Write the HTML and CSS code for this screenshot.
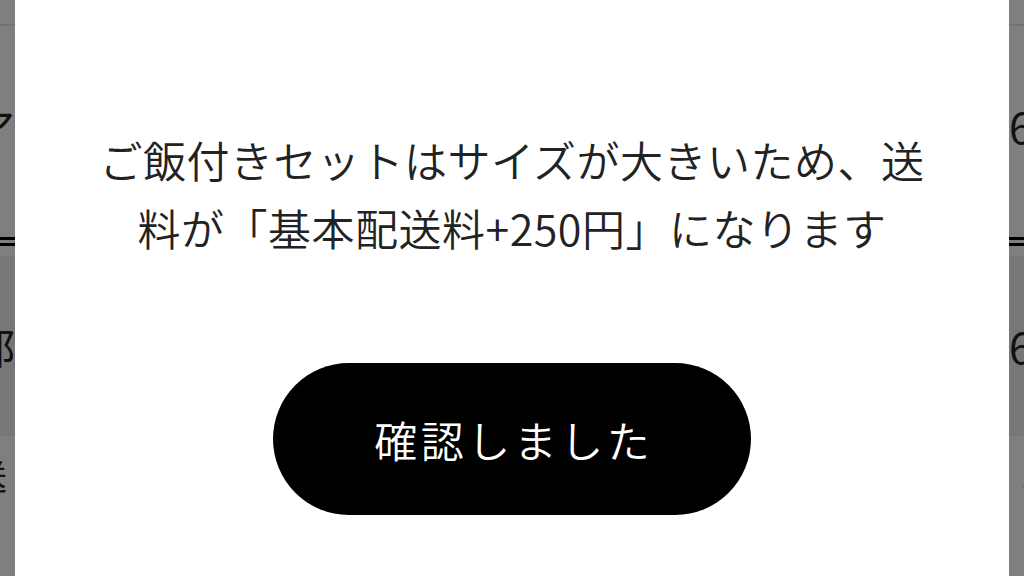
FILE: index.html
```html
<!DOCTYPE html>
<html lang="ja">
<head>
<meta charset="utf-8">
<title>確認</title>
<link rel="stylesheet" href="styles.css">
</head>
<body>
<div class="backdrop">
  <div class="page">
    <div class="page-head"></div>
    <div class="page-row page-row-tall">
      <span class="cell">ア</span>
      <span class="cell">680</span>
    </div>
    <div class="double-rule"></div>
    <div class="page-row page-row-band">
      <span class="cell">部</span>
      <span class="cell">650</span>
    </div>
    <div class="page-row page-row-small">
      <span class="cell cell-small">送</span>
      <span class="cell cell-small">300</span>
    </div>
  </div>
</div>

<div class="overlay">
  <div class="modal">
    <p class="message">ご飯付きセットはサイズが大きいため、送<br>料が「基本配送料+250円」になります</p>
    <button class="confirm" type="button">確認しました</button>
  </div>
</div>
</body>
</html>
```
FILE: styles.css
```css
html, body {
  margin: 0;
  padding: 0;
  height: 100%;
  overflow: hidden;
}

body {
  background: #7f7f7f;
  font-family: "Noto Sans CJK JP", "Noto Sans", sans-serif;
  color: #111;
}

.backdrop {
  width: 100%;
  height: 100%;
  overflow: hidden;
}

.page {
  display: flex;
  flex-direction: column;
  margin: 0 -55px 0 -27px;
}

.page-head {
  height: 24px;
  border-bottom: 2px solid #727272;
}

.page-row {
  display: flex;
  justify-content: space-between;
  align-items: center;
}

.page-row-tall {
  height: 211px;
  padding-bottom: 12px;
  box-sizing: border-box;
}

.cell {
  font-size: 42px;
  line-height: 1;
}

.cell-small {
  font-size: 34px;
}

.double-rule {
  height: 3px;
  border-top: 3px solid #000;
  border-bottom: 3px solid #000;
  margin-bottom: 10px;
}

.page-row-band {
  height: 180px;
  background: #777777;
}

.page-row-small {
  height: 90px;
  padding-bottom: 10px;
  box-sizing: border-box;
}

.overlay {
  position: fixed;
  inset: 0;
  display: flex;
  justify-content: center;
}

.modal {
  width: 994px;
  height: 100%;
  background: #fff;
  display: flex;
  flex-direction: column;
  align-items: center;
  padding-top: 125px;
  box-sizing: border-box;
}

.message {
  margin: 0;
  font-size: 43px;
  font-weight: 350;
  line-height: 68px;
  color: #222;
  text-align: center;
  letter-spacing: 0.5px;
}

.confirm {
  margin-top: 102px;
  width: 478px;
  height: 152px;
  border: none;
  border-radius: 76px;
  background: #000;
  color: #fff;
  font-family: "Noto Sans CJK JP", "Noto Sans", sans-serif;
  font-size: 43px;
  font-weight: 350;
  letter-spacing: 3.5px;
  padding: 0 0 0 3.5px;
  cursor: pointer;
}
```
